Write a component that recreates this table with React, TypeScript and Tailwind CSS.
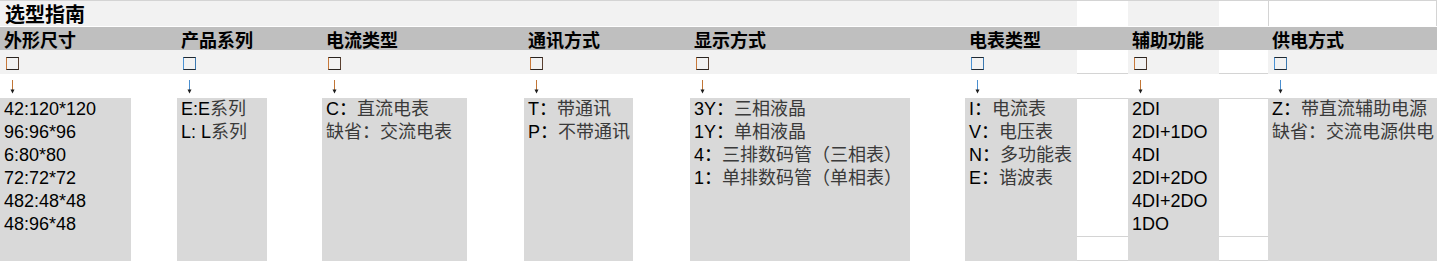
import React from "react";

type Col = { title: string; blue: boolean; lines: [string, string][] };

const DATA: Col[] = [
  {
    title: "外形尺寸",
    blue: false,
    lines: [
      ["42:120*120", ""],
      ["96:96*96", ""],
      ["6:80*80", ""],
      ["72:72*72", ""],
      ["482:48*48", ""],
      ["48:96*48", ""],
    ],
  },
  { title: "产品系列", blue: true, lines: [["E:E", "系列"], ["L: L", "系列"]] },
  { title: "电流类型", blue: false, lines: [["C：", "直流电表"], ["", "缺省：交流电表"]] },
  { title: "通讯方式", blue: false, lines: [["T：", "带通讯"], ["P：", "不带通讯"]] },
  {
    title: "显示方式",
    blue: false,
    lines: [
      ["3Y：", "三相液晶"],
      ["1Y：", "单相液晶"],
      ["4：", "三排数码管（三相表）"],
      ["1：", "单排数码管（单相表）"],
    ],
  },
  {
    title: "电表类型",
    blue: true,
    lines: [
      ["I：", "电流表"],
      ["V：", "电压表"],
      ["N：", "多功能表"],
      ["E：", "谐波表"],
    ],
  },
  {
    title: "辅助功能",
    blue: false,
    lines: [
      ["2DI", ""],
      ["2DI+1DO", ""],
      ["4DI", ""],
      ["2DI+2DO", ""],
      ["4DI+2DO", ""],
      ["1DO", ""],
    ],
  },
  { title: "供电方式", blue: true, lines: [["Z：", "带直流辅助电源"], ["", "缺省：交流电源供电"]] },
];

const IDX = Array.from({ length: 15 }, (_, i) => i);

function Box({ blue }: { blue: boolean }) {
  return (
    <span
      className={
        blue
          ? "block w-[13px] h-[13px] border border-[#202830] border-l-[#4a92d4] border-r-[#3a78b0]"
          : "block w-[13px] h-[13px] border border-[#2a2420] border-l-[#c8793a] border-r-[#5a4030]"
      }
    />
  );
}

function Arrow({ blue }: { blue: boolean }) {
  return (
    <svg width="7" height="14" viewBox="0 0 7 14" className="block">
      <line x1="3.5" y1="0" x2="3.5" y2="10" stroke={blue ? "#4a8fd0" : "#c27636"} strokeWidth="1" />
      <path d="M1.5 9.5 L5.5 9.5 L3.5 13.5 Z" fill="#1c1c1c" />
    </svg>
  );
}

export default function App() {
  return (
    <div className="w-[1437px] h-[261px] bg-white overflow-hidden border-t border-[#d4d4d4] font-['Liberation_Sans','Noto_Sans_CJK_SC',sans-serif]">
      <div className="grid grid-cols-[131px_46px_90px_55px_145px_57px_109px_57px_220px_55px_112px_51px_91px_49px_169px] grid-rows-[25px_1px_23px_24px_24px_163px]">
        {/* Title row */}
        <div className="col-span-11 bg-[#f2f2f2] pl-[5px] flex items-center">
          <span className="font-['Noto_Sans_CJK_SC',sans-serif] font-bold text-[20px] leading-none text-black">选型指南</span>
        </div>
        <div className="bg-white" />
        <div className="bg-[#f2f2f2]" />
        <div className="bg-white" />
        <div className="bg-white border-l border-r border-[#d4d4d4]" />

        {/* thin white separator */}
        <div className="col-span-15 bg-white" />

        {/* Header row */}
        {IDX.map((j) => (
          <div key={"h" + j} className="bg-[#bfbfbf] flex items-center whitespace-nowrap overflow-visible">
            {j % 2 === 0 ? (
              <span className="pl-[4px] font-['Noto_Sans_CJK_SC',sans-serif] font-bold text-[18px] leading-none text-black">
                {DATA[j / 2].title}
              </span>
            ) : null}
          </div>
        ))}

        {/* Checkbox row */}
        {IDX.map((j) =>
          j === 11 || j === 13 ? (
            <div key={"c" + j} className="bg-white border-b border-[#d4d4d4]" />
          ) : (
            <div key={"c" + j} className="bg-[#f2f2f2] pl-[6px] pt-[7px]">
              {j % 2 === 0 ? <Box blue={DATA[j / 2].blue} /> : null}
            </div>
          )
        )}

        {/* Arrow row */}
        {IDX.map((j) => (
          <div key={"a" + j} className="bg-white pl-[9px] pt-[6px]">
            {j % 2 === 0 ? <Arrow blue={DATA[j / 2].blue} /> : null}
          </div>
        ))}

        {/* Content row */}
        {IDX.map((j) =>
          j % 2 === 0 ? (
            <div key={"d" + j} className="bg-[#d9d9d9] pl-[4px] overflow-hidden text-[18px]">
              {DATA[j / 2].lines.map(([a, b], k) => (
                <div key={k} className="h-[23px] leading-[23px] whitespace-nowrap">
                  <span className="text-black">{a}</span>
                  <span className="text-[#3a3a3a]">{b}</span>
                </div>
              ))}
            </div>
          ) : j === 11 || j === 13 ? (
            <div key={"d" + j} className="bg-white border-t border-[#d4d4d4] flex flex-col">
              <div className="h-[138px] border-b border-[#d4d4d4]" />
              <div className="flex-1 border-b border-[#d4d4d4]" />
            </div>
          ) : (
            <div key={"d" + j} className="bg-white" />
          )
        )}
      </div>
    </div>
  );
}
